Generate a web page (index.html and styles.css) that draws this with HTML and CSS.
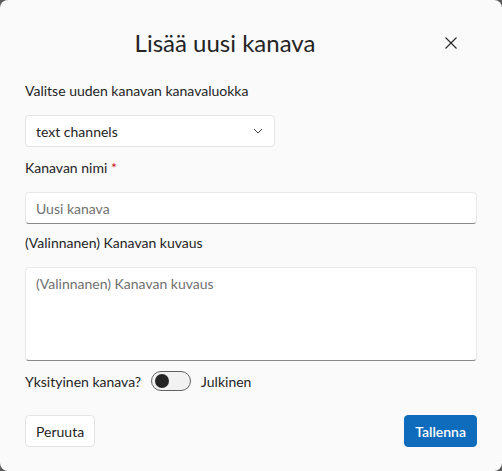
FILE: index.html
```html
<!DOCTYPE html>
<html lang="fi">
<head>
<meta charset="utf-8">
<link rel="stylesheet" href="styles.css">
</head>
<body>
<div class="dialog">
  <div class="header">
    <h1 class="title">Lisää uusi kanava</h1>
    <button class="close" aria-label="Sulje">
      <svg width="12" height="12" viewBox="0 0 12 12"><path d="M0.5 0.5L11.5 11.5M11.5 0.5L0.5 11.5" stroke="#242424" stroke-width="1.1" fill="none"/></svg>
    </button>
  </div>
  <div class="form">
    <label class="label">Valitse uuden kanavan kanavaluokka</label>
    <div class="select">
      <span>text channels</span>
      <svg width="10" height="6" viewBox="0 0 10 6"><path d="M1 1L5 5L9 1" stroke="#424242" stroke-width="1" fill="none"/></svg>
    </div>
    <label class="label">Kanavan nimi <span class="req">*</span></label>
    <div class="input"><span class="ph">Uusi kanava</span></div>
    <label class="label">(Valinnanen) Kanavan kuvaus</label>
    <div class="textarea"><span class="ph">(Valinnanen) Kanavan kuvaus</span></div>
    <div class="toggle-row">
      <span>Yksityinen kanava?</span>
      <span class="switch"><span class="knob"></span></span>
      <span>Julkinen</span>
    </div>
  </div>
  <div class="actions">
    <button class="btn">Peruuta</button>
    <button class="btn primary">Tallenna</button>
  </div>
</div>
</body>
</html>
```
FILE: styles.css
```css
html, body { margin: 0; padding: 0; }
body {
  background: #5a5a5a;
  width: 502px;
  height: 471px;
  font-family: "Segoe UI", Lato, "Liberation Sans", sans-serif;
  font-size: 14px;
  color: #242424;
}
.dialog {
  box-sizing: border-box;
  width: 502px;
  height: 471px;
  background: #fafafa;
  border-radius: 8px;
  padding: 0 25px 0 25px;
  display: flex;
  flex-direction: column;
}
.header {
  display: flex;
  align-items: center;
  height: 81px;
  padding-top: 5px;
  box-sizing: border-box;
}
.title {
  margin: 0;
  flex: 1;
  text-align: center;
  font-size: 24px;
  font-weight: 400;
  line-height: 32px;
  padding-right: 19px;
}
.close {
  border: 0;
  background: none;
  padding: 0;
  width: 14px;
  height: 14px;
  margin-right: 19px;
  display: flex;
  align-items: center;
  justify-content: center;
}
.form { display: flex; flex-direction: column; }
.label { line-height: 20px; margin-bottom: 14px; }
.label.tight { margin-bottom: 12px; }
.req { color: #c50f1f; }
.select {
  box-sizing: border-box;
  width: 250px;
  height: 32px;
  background: #fff;
  border: 1px solid #e3e3e3;
  border-radius: 4px;
  display: flex;
  align-items: center;
  justify-content: space-between;
  padding: 0 11px 0 10px;
  margin-bottom: 11px;
}
.input {
  box-sizing: border-box;
  height: 32px;
  background: #fff;
  border: 1px solid #e8e8e8;
  border-bottom-color: #8a8a8a;
  border-radius: 4px;
  display: flex;
  align-items: center;
  padding: 0 10px;
  margin-bottom: 9px;
}
.ph { color: #707070; }
.textarea {
  box-sizing: border-box;
  height: 94px;
  background: #fff;
  border: 1px solid #e8e8e8;
  border-bottom-color: #8a8a8a;
  border-radius: 4px;
  padding: 7px 10px;
  margin-bottom: 10px;
}
.toggle-row {
  display: flex;
  align-items: center;
  gap: 10px;
  height: 20px;
}
.switch {
  box-sizing: border-box;
  width: 40px;
  height: 20px;
  border: 1px solid #616161;
  border-radius: 10px;
  background: #f2f2f2;
  display: flex;
  align-items: center;
  padding-left: 3px;
}
.knob {
  width: 14px;
  height: 14px;
  border-radius: 50%;
  background: #242424;
}
.actions {
  display: flex;
  justify-content: space-between;
  margin-top: 24px;
}
.btn {
  font: inherit;
  height: 32px;
  padding: 0 10px;
  border-radius: 4px;
  background: #fff;
  border: 1px solid #e3e3e3;
  color: #242424;
}
.btn.primary {
  background: #0f6cbd;
  border-color: #0f6cbd;
  color: #fff;
  font-weight: 600;
}
```
